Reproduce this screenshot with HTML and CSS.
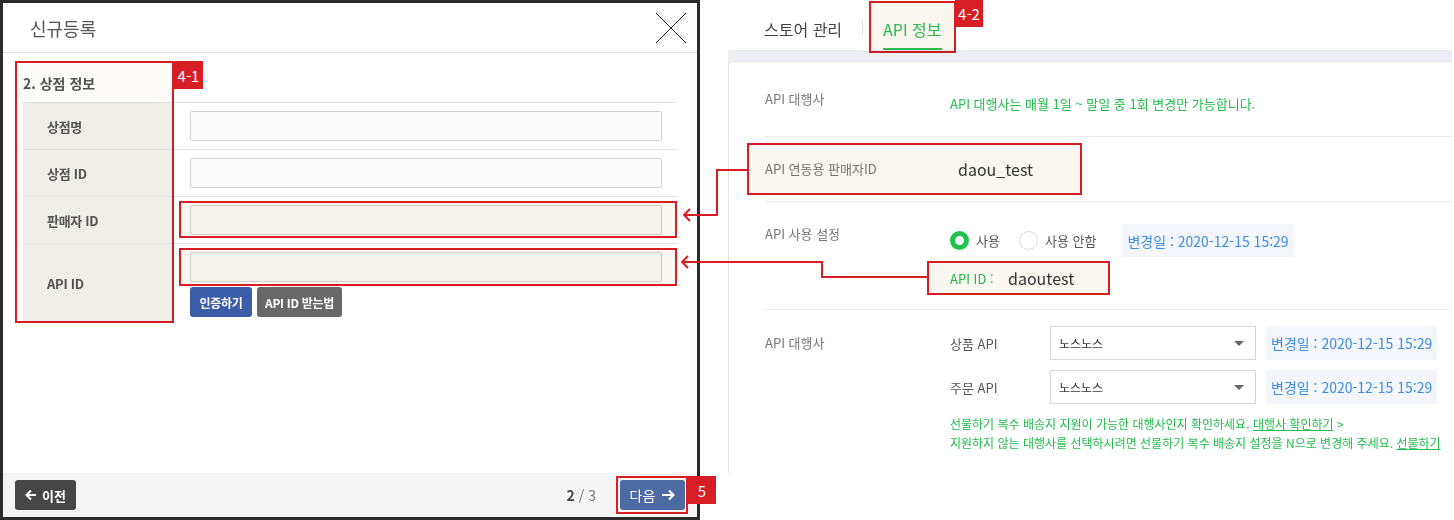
FILE: index.html
```html
<!DOCTYPE html>
<html lang="ko">
<head>
    <meta charset="UTF-8">
    <meta name="viewport" content="width=device-width, initial-scale=1.0">
    <title>API 정보 등록 안내</title>
    <link rel="stylesheet" href="styles.css">
</head>
<body>
<div id="page">
    <div class="modal">
        <div class="modal-head">
            <div class="modal-title">신규등록</div>
            <svg class="close" width="32" height="32" viewBox="0 0 32 32"><path d="M1 1L31 31M31 1L1 31" stroke="#222" stroke-width="1" fill="none"/></svg>
        </div>
        <div class="modal-body">
            <div class="sec-title">2. 상점 정보</div>
            <div class="form-table">
                <div class="form-row"><div class="form-label">상점명</div><div class="form-field"><input type="text" class="txt"></div></div>
                <div class="form-row"><div class="form-label">상점 ID</div><div class="form-field"><input type="text" class="txt"></div></div>
                <div class="form-row"><div class="form-label">판매자 ID</div><div class="form-field"><input type="text" class="txt"></div></div>
                <div class="form-row tall">
                    <div class="form-label">API ID</div>
                    <div class="form-field">
                        <input type="text" class="txt">
                        <div class="btns"><button class="btn btn-blue">인증하기</button><button class="btn btn-gray">API ID 받는법</button></div>
                    </div>
                </div>
            </div>
        </div>
        <div class="modal-foot">
            <button class="btn-prev"><svg width="12" height="12" viewBox="0 0 12 12"><path d="M11 6H1.5M6 1.5L1.5 6L6 10.5" stroke="#fff" stroke-width="2" fill="none"/></svg>이전</button>
            <div class="foot-right">
                <span class="pager"><b>2</b> / 3</span>
                <button class="btn-next">다음<svg width="14" height="12" viewBox="0 0 14 12"><path d="M1 6H12.5M8 1.5L12.5 6L8 10.5" stroke="#fff" stroke-width="2" fill="none"/></svg></button>
            </div>
        </div>
    </div>

    <div class="store">
        <div class="tabs">
            <div class="tab">스토어 관리</div>
            <span class="tab-sep"></span>
            <div class="tab on">API 정보</div>
        </div>
        <div class="band"></div>
        <div class="panel">
            <div class="info-row row-agency">
                <div class="info-label">API 대행사</div>
                <div class="info-value green">API 대행사는 매월 1일 ~ 말일 중 1회 변경만 가능합니다.</div>
            </div>
            <div class="info-row row-seller">
                <div class="info-label">API 연동용 판매자ID</div>
                <div class="seller-id">daou_test</div>
            </div>
            <div class="info-row row-use">
                <div class="info-label">API 사용 설정</div>
                <div>
                    <div class="use-line">
                        <label class="radio"><span class="dot on"></span>사용</label>
                        <label class="radio"><span class="dot"></span>사용 안함</label>
                        <span class="chg">변경일 : 2020-12-15 15:29</span>
                    </div>
                    <div class="apiid-line"><span class="apiid-key">API ID :</span><span class="apiid-val">daoutest</span></div>
                </div>
            </div>
            <div class="info-row row-vendor">
                <div class="info-label tall-label">API 대행사</div>
                <div>
                    <div class="api-sub">
                        <span class="sub-key">상품 API</span>
                        <div class="select"><span>노스노스</span><span class="caret"></span></div>
                        <span class="chg">변경일 : 2020-12-15 15:29</span>
                    </div>
                    <div class="api-sub">
                        <span class="sub-key">주문 API</span>
                        <div class="select"><span>노스노스</span><span class="caret"></span></div>
                        <span class="chg">변경일 : 2020-12-15 15:29</span>
                    </div>
                    <div class="notes">
                        <div>선물하기 복수 배송지 지원이 가능한 대행사인지 확인하세요. <a href="#">대행사 확인하기</a> &gt;</div>
                        <div>지원하지 않는 대행사를 선택하시려면 선물하기 복수 배송지 설정을 N으로 변경해 주세요. <a href="#">선물하기</a></div>
                    </div>
                </div>
            </div>
        </div>
    </div>

    <!-- annotation layer -->
    <div class="mark tint-light m-41"></div>
    <div class="tag t-41">4-1</div>
    <div class="mark tint m-seller"></div>
    <div class="mark tint m-apiid"></div>
    <div class="mark m-next"></div>
    <div class="tag t-5">5</div>
    <div class="mark tint m-42"></div>
    <div class="tag t-42">4-2</div>
    <div class="mark tint m-seller-r"></div>
    <div class="mark tint m-apiid-r"></div>
    <svg class="arrows" width="1454" height="520" viewBox="0 0 1454 520">
        <g fill="none" stroke="#d71e25" stroke-width="2">
            <path d="M747 170H717V215H684"/>
            <path d="M690 209L684 215L690 221"/>
            <path d="M927 277H822V262H682"/>
            <path d="M688 256L682 262L688 268"/>
        </g>
    </svg>
</div>
</body>
</html>
```

FILE: styles.css
```css
*{
    box-sizing: border-box;
}
body{
    margin: 0;
    font-family: "Noto Sans CJK KR", "Noto Sans", sans-serif;
    color: #333;
    background: #fff;
}
#page{
    position: relative;
    display: flex;
    width: 1454px;
    height: 520px;
    overflow: hidden;
}

/* modal */
.modal{
    display: flex;
    flex-direction: column;
    flex-shrink: 0;
    width: 700px;
    height: 520px;
    border: 3px solid #2b2b2b;
}
.modal-head{
    display: flex;
    align-items: center;
    justify-content: space-between;
    height: 50px;
    padding: 0 10px 0 27px;
    border-bottom: 1px solid #dcdcdc;
}
.modal-title{
    font-size: 18px;
    color: #555;
}
.modal-body{
    flex: 1;
    padding: 0 20px;
}
.sec-title{
    padding: 15px 0 4px;
    line-height: 30px;
    font-size: 14px;
    font-weight: 700;
    color: #555;
}
.form-table{
    border-top: 1px solid #e2e2e2;
}
.form-row{
    display: flex;
    min-height: 47px;
    border-bottom: 1px solid #e4e4e4;
}
.form-row.tall{
    min-height: 78px;
    border-bottom: 0;
}
.form-label{
    display: flex;
    align-items: center;
    width: 150px;
    padding-left: 24px;
    background: #f1f1ef;
    font-size: 13px;
    font-weight: 700;
    color: #555;
    letter-spacing: -0.3px;
}
.form-field{
    flex: 1;
    display: flex;
    flex-direction: column;
    justify-content: center;
    gap: 5px;
    padding: 0 15px 0 17px;
}
.tall .form-field{
    justify-content: flex-start;
    padding-top: 8px;
}
.txt{
    display: block;
    width: 100%;
    height: 30px;
    border: 1px solid #d4d4d4;
    border-radius: 2px;
    background: #fbfbfb;
}
.btns{
    display: flex;
    gap: 5px;
}
.btn{
    height: 30px;
    padding: 0;
    border: 0;
    border-radius: 3px;
    color: #fff;
    font: 700 12px "Noto Sans CJK KR", sans-serif;
    letter-spacing: -0.3px;
}
.btn-blue{
    width: 62px;
    background: #3b5ca6;
}
.btn-gray{
    width: 85px;
    background: #686868;
}
.modal-foot{
    display: flex;
    align-items: center;
    justify-content: space-between;
    height: 44px;
    padding: 0 12px;
    background: #f5f5f5;
}
.btn-prev, .btn-next{
    display: flex;
    align-items: center;
    justify-content: center;
    height: 30px;
    border: 0;
    border-radius: 3px;
    color: #fff;
    font-family: "Noto Sans CJK KR", sans-serif;
}
.btn-prev{
    gap: 5px;
    width: 61px;
    background: #464646;
    font-size: 13px;
    font-weight: 700;
}
.btn-next{
    gap: 6px;
    width: 65px;
    background: #4d6aa3;
    font-size: 14px;
}
.foot-right{
    display: flex;
    align-items: center;
    gap: 24px;
}
.pager{
    font-size: 14px;
    color: #777;
}
.pager b{
    color: #444;
}

/* store settings */
.store{
    display: flex;
    flex-direction: column;
    width: 724px;
    margin: 0 2px 0 28px;
    overflow: hidden;
}
.tabs{
    display: flex;
    height: 50px;
    padding-left: 36px;
}
.tab{
    height: 50px;
    padding-top: 10px;
    line-height: 38px;
    font-size: 16px;
    color: #444;
}
.tab.on{
    color: #2cc054;
    border-bottom: 2px solid #2cc054;
}
.tab-sep{
    width: 1px;
    height: 15px;
    margin: 20px 20px 0;
    background: #dddddd;
}
.band{
    height: 12px;
    background: #eceef3;
    border-bottom: 1px solid #dfe2e8;
}
.panel{
    padding-left: 36px;
    border-left: 1px solid #e2e4e9;
    font-size: 13px;
}
.info-row{
    display: flex;
    border-bottom: 1px solid #ececec;
}
.info-label{
    flex-shrink: 0;
    width: 185px;
    line-height: 20px;
    color: #777;
}
.green{
    color: #22bd4c;
}
.row-agency{
    padding: 27px 0 22px;
}
.row-agency .info-value{
    margin-top: 5px;
    line-height: 20px;
}
.row-seller{
    padding: 20px 0;
}
.row-seller .info-label{
    line-height: 24px;
}
.seller-id{
    margin-left: 8px;
    line-height: 24px;
    font-size: 16px;
    color: #333;
}
.row-use{
    padding: 22px 0 14px;
}
.use-line{
    display: flex;
    align-items: center;
    height: 33px;
}
.radio{
    display: flex;
    align-items: center;
    gap: 7px;
    margin-right: 19px;
    color: #555;
}
.dot{
    width: 19px;
    height: 19px;
    border: 1px solid #dcdcdc;
    border-radius: 50%;
    background: #fff;
}
.dot.on{
    border: 5px solid #1fc34c;
}
.chg{
    display: flex;
    align-items: center;
    height: 33px;
    margin-left: 7px;
    padding: 0 5px;
    background: #f4f6fb;
    color: #3d8ee2;
    font-size: 14px;
    white-space: nowrap;
}
.apiid-line{
    display: flex;
    align-items: center;
    height: 34px;
    margin-top: 4px;
}
.apiid-key{
    width: 58px;
    color: #22bd4c;
}
.apiid-val{
    font-size: 16px;
    color: #333;
}
.row-vendor{
    padding: 16px 0 21px;
    border-bottom: 0;
}
.tall-label{
    line-height: 34px;
}
.api-sub{
    display: flex;
    align-items: center;
    height: 34px;
    margin-bottom: 10px;
}
.sub-key{
    width: 100px;
    color: #555;
}
.select{
    display: flex;
    align-items: center;
    justify-content: space-between;
    width: 206px;
    height: 34px;
    padding: 0 11px 0 8px;
    border: 1px solid #d9d9d9;
    font-size: 12px;
    color: #333;
}
.caret{
    width: 0;
    height: 0;
    border-left: 5px solid transparent;
    border-right: 5px solid transparent;
    border-top: 5px solid #666;
}
.api-sub .chg{
    height: 34px;
    margin-left: 10px;
}
.notes{
    line-height: 19px;
    font-size: 12px;
    color: #22bd4c;
    white-space: nowrap;
}
.notes a{
    color: #22bd4c;
}

/* annotations */
.mark{
    position: absolute;
    border: 2px solid #d71e25;
}
.mark.tint{
    background: #faf7f0;
    mix-blend-mode: multiply;
}
.mark.tint-light{
    background: #fdfcf9;
    mix-blend-mode: multiply;
}
.tag{
    position: absolute;
    display: flex;
    align-items: center;
    justify-content: center;
    background: #d71e25;
    color: #fff;
    font-size: 15px;
}
.m-41{ left: 15px; top: 61px; width: 159px; height: 262px; }
.t-41{ left: 174px; top: 61px; width: 29px; height: 28px; }
.m-seller{ left: 179px; top: 201px; width: 498px; height: 37px; }
.m-apiid{ left: 179px; top: 248px; width: 498px; height: 38px; }
.m-next{ left: 616px; top: 476px; width: 72px; height: 38px; }
.t-5{ left: 688px; top: 476px; width: 28px; height: 28px; }
.m-42{ left: 869px; top: 1px; width: 87px; height: 52px; }
.t-42{ left: 955px; top: 0; width: 28px; height: 27px; }
.m-seller-r{ left: 747px; top: 143px; width: 335px; height: 52px; }
.m-apiid-r{ left: 927px; top: 261px; width: 183px; height: 34px; }
.arrows{
    position: absolute;
    left: 0;
    top: 0;
}
```
